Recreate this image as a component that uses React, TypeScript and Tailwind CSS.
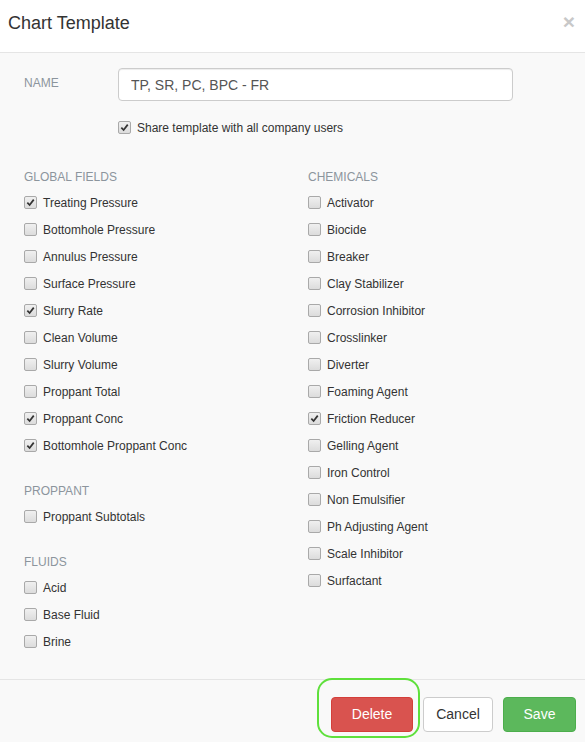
import React from 'react';

const globalFields: [string, boolean][] = [
  ['Treating Pressure', true],
  ['Bottomhole Pressure', false],
  ['Annulus Pressure', false],
  ['Surface Pressure', false],
  ['Slurry Rate', true],
  ['Clean Volume', false],
  ['Slurry Volume', false],
  ['Proppant Total', false],
  ['Proppant Conc', true],
  ['Bottomhole Proppant Conc', true],
];

const proppant: [string, boolean][] = [['Proppant Subtotals', false]];

const fluids: [string, boolean][] = [
  ['Acid', false],
  ['Base Fluid', false],
  ['Brine', false],
];

const chemicals: [string, boolean][] = [
  ['Activator', false],
  ['Biocide', false],
  ['Breaker', false],
  ['Clay Stabilizer', false],
  ['Corrosion Inhibitor', false],
  ['Crosslinker', false],
  ['Diverter', false],
  ['Foaming Agent', false],
  ['Friction Reducer', true],
  ['Gelling Agent', false],
  ['Iron Control', false],
  ['Non Emulsifier', false],
  ['Ph Adjusting Agent', false],
  ['Scale Inhibitor', false],
  ['Surfactant', false],
];

function Box({ checked }: { checked: boolean }) {
  return (
    <span className="flex h-[13px] w-[13px] shrink-0 items-center justify-center rounded-[2px] border border-[#a9a9a9] bg-gradient-to-b from-[#f0f0f0] to-[#dcdcdc]">
      {checked && (
        <svg width="9" height="9" viewBox="0 0 10 10">
          <path d="M1.5 5.2 L4 7.8 L8.6 1.8" fill="none" stroke="#333" strokeWidth="1.9" />
        </svg>
      )}
    </span>
  );
}

function Item({ label, checked }: { label: string; checked: boolean }) {
  return (
    <label className="flex h-[27px] items-center gap-[6px] text-[12px] text-[#333]">
      <Box checked={checked} />
      <span>{label}</span>
    </label>
  );
}

function Section({ title, items, last }: { title: string; items: [string, boolean][]; last?: boolean }) {
  return (
    <div className={last ? '' : 'mb-[19px]'}>
      <div className="flex h-[25px] items-center text-[12px] uppercase text-[#8c959d]">{title}</div>
      {items.map(([l, c]) => (
        <Item key={l} label={l} checked={c} />
      ))}
    </div>
  );
}

export default function App() {
  return (
    <div className="relative h-[742px] w-[585px] overflow-hidden bg-white font-['Liberation_Sans',Arial,sans-serif] text-[#333]">
      {/* Header */}
      <div className="flex h-[53px] items-center justify-between border-b border-[#e5e5e5] bg-white pb-[6px] pl-[8px] pr-[10px]">
        <h1 className="text-[18px] font-normal leading-none text-[#333]">Chart Template</h1>
        <span className="mt-[-4px] text-[21px] font-bold leading-none text-[#c8c8c8]">×</span>
      </div>

      {/* Body */}
      <div className="bg-[#f9f9f9] px-[24px] pb-[24px] pt-[15px]">
        <div className="flex items-start">
          <div className="w-[94px] pt-[8px] text-[12px] leading-[14px] text-[#8c959d]">NAME</div>
          <input
            className="h-[33px] w-[395px] rounded-[4px] border border-[#ccc] bg-white px-[12px] text-[14px] text-[#555] shadow-[inset_0_1px_1px_rgba(0,0,0,0.075)] outline-none"
            defaultValue="TP, SR, PC, BPC - FR"
          />
        </div>
        <div className="ml-[94px] mt-[13px]">
          <Item label="Share template with all company users" checked />
        </div>

        <div className="mt-[23px] grid grid-cols-[284px_1fr]">
          <div>
            <Section title="Global Fields" items={globalFields} />
            <Section title="Proppant" items={proppant} />
            <Section title="Fluids" items={fluids} last />
          </div>
          <div>
            <Section title="Chemicals" items={chemicals} last />
          </div>
        </div>
      </div>

      {/* Footer */}
      <div className="flex justify-end gap-[10px] border-t border-[#e5e5e5] bg-[#f9f9f9] pb-[15px] pr-[9px] pt-[17px]">
        <button className="h-[35px] w-[82px] rounded-[4px] border border-[#d43f3a] bg-[#d9534f] text-[14px] text-white">Delete</button>
        <button className="h-[35px] w-[70px] rounded-[4px] border border-[#ccc] bg-white text-[14px] text-[#333]">Cancel</button>
        <button className="h-[35px] w-[73px] rounded-[4px] border border-[#4cae4c] bg-[#5cb85c] text-[14px] text-white">Save</button>
      </div>

      {/* highlight annotation */}
      <div className="pointer-events-none absolute left-[317px] top-[678px] h-[60px] w-[103px] rounded-[15px] border-2 border-[#5fe03c]" />
    </div>
  );
}
